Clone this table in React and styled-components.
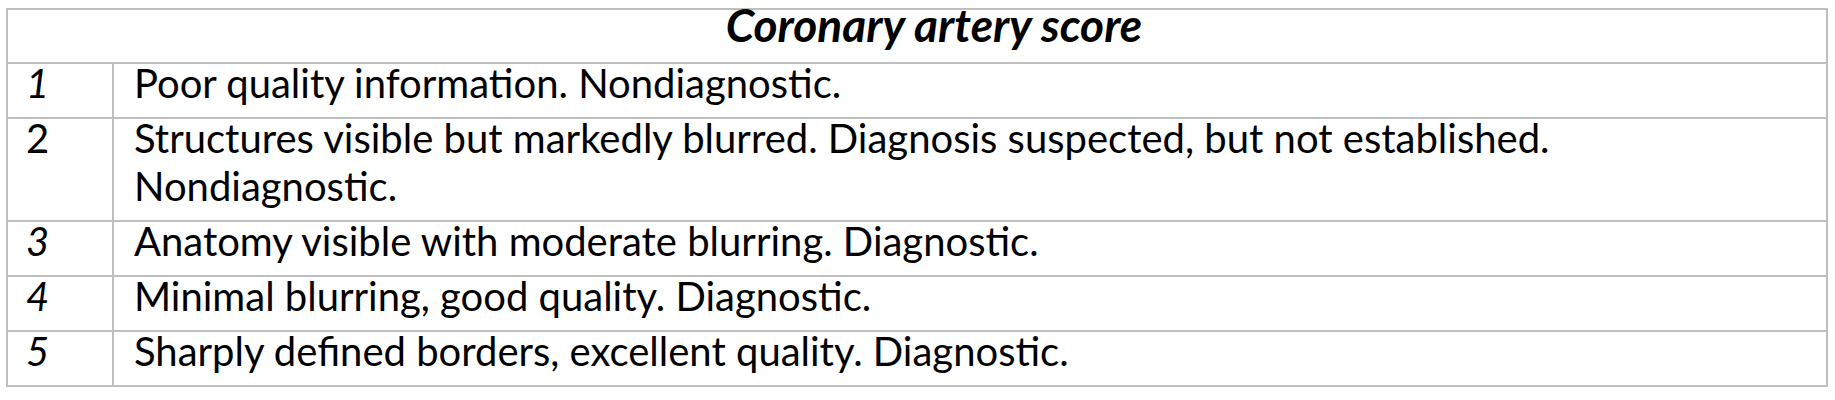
import React from "react";
import styled, { createGlobalStyle } from "styled-components";

const rows = [
  { id: 1, score: "1", text: "Poor quality information. Nondiagnostic." },
  {
    id: 2,
    score: "2",
    upright: true,
    text: "Structures visible but markedly blurred. Diagnosis suspected, but not established. Nondiagnostic.",
  },
  { id: 3, score: "3", text: "Anatomy visible with moderate blurring. Diagnostic." },
  { id: 4, score: "4", text: "Minimal blurring, good quality. Diagnostic." },
  { id: 5, score: "5", text: "Sharply defined borders, excellent quality. Diagnostic." },
];

const ScoreTable = () => {
  return (
    <Page>
      <GlobalStyle />
      <Table>
        <colgroup>
          <col style={{ width: 106 }} />
          <col />
        </colgroup>
        <thead>
          <tr>
            <Header colSpan={2}>
              <Text $lift={9}>Coronary artery score</Text>
            </Header>
          </tr>
        </thead>
        <tbody>
          {rows.map(({ id, score, text, upright }) => (
            <tr key={id}>
              <Score $upright={upright}>
                <Text $lift={5}>{score}</Text>
              </Score>
              <Description>
                <Text $lift={5}>{text}</Text>
              </Description>
            </tr>
          ))}
        </tbody>
      </Table>
    </Page>
  );
};
export default ScoreTable;

const GlobalStyle = createGlobalStyle`
  body {
    margin: 0;
    background: #ffffff;
  }
`;

const Page = styled.div`
  width: 1835px;
  height: 400px;
  padding: 8px 0 0 6px;
  box-sizing: border-box;
  background: #ffffff;
  font-family: Lato, "Open Sans", sans-serif;
  color: #000000;
`;

const Table = styled.table`
  width: 1822px;
  border-collapse: collapse;
  table-layout: fixed;
  border: 2px solid #bfbfbf;
`;

const Cell = styled.td`
  border: 2px solid #bfbfbf;
  padding: 0 0 5px;
  font-size: 40px;
  line-height: 48px;
  vertical-align: top;
`;

// Lato sits lower in its line box than the original Calibri, so lift the text a little
const Text = styled.div`
  margin: ${(p) => `-${p.$lift}px 0 ${p.$lift}px`};
`;

const Header = styled(Cell).attrs({ as: "th" })`
  font-weight: 700;
  font-style: italic;
  font-size: 46px;
  text-align: center;
  padding: 0 0 4px 34px;
`;

const Score = styled(Cell)`
  font-style: ${(p) => (p.$upright ? "normal" : "italic")};
  padding-left: 18px;
`;

const Description = styled(Cell)`
  padding-left: 20px;
  padding-right: 180px;
`;
